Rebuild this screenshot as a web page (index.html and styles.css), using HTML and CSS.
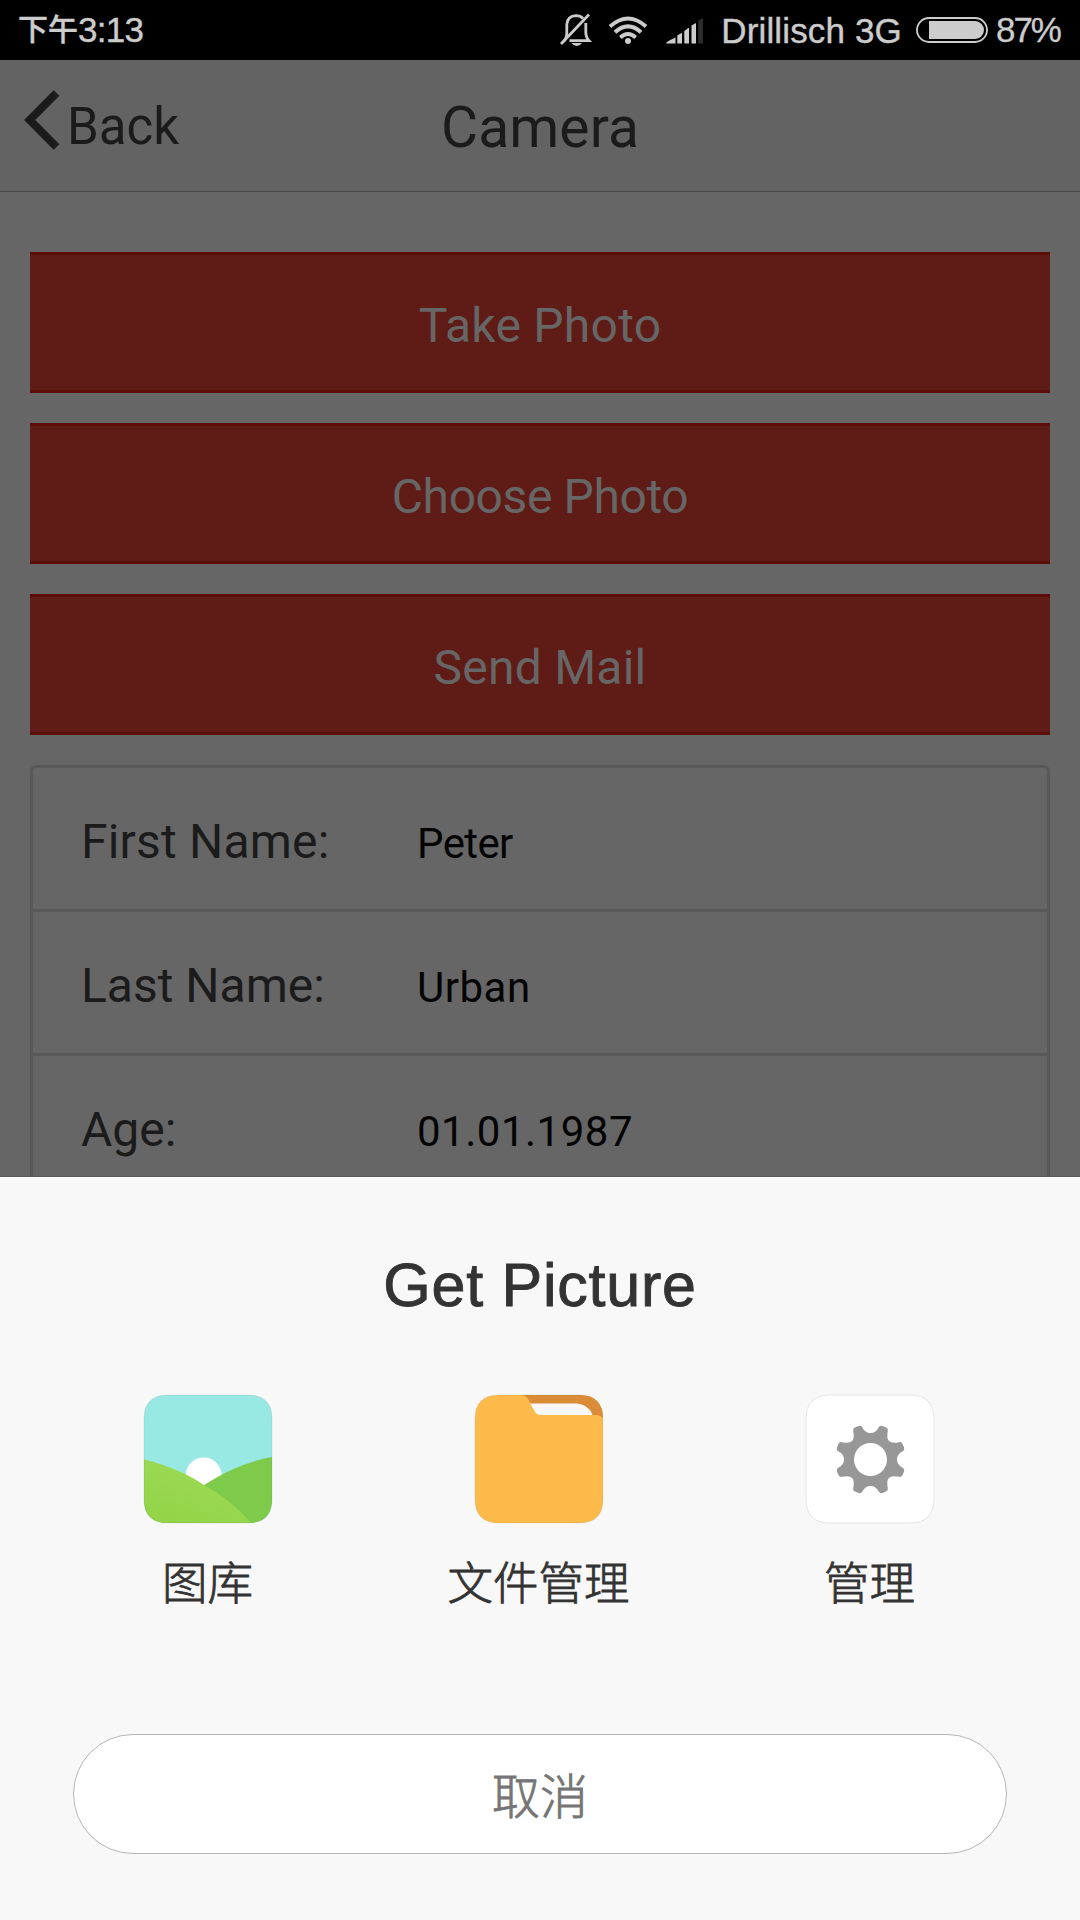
FILE: index.html
```html
<!DOCTYPE html>
<html lang="zh-CN">
<head>
<meta charset="utf-8">
<title>Camera</title>
<link rel="stylesheet" href="styles.css">
</head>
<body>
<div class="phone">
  <div class="status">
    <div class="clock"><span class="clock-cjk">下午</span>3:13</div>
    <div class="indicators">
      <svg class="ind-bell" viewBox="0 0 32 34" width="32" height="34">
        <g fill="none" stroke="#ccc" stroke-width="2.8">
          <path d="M3.500 28.300 Q6.800 25.500 6.800 20 V11.500 Q7.500 3 16 2.700 Q20.500 2.700 23 5.500"/>
          <path d="M9.500 27.700 H29 Q25.800 24.500 25.800 19 V10"/>
          <path d="M1 31 L29 1.500"/>
        </g>
        <path d="M11.500 30 H22 Q20 33 16.700 33 Q13.500 33 11.500 30Z" fill="#ccc"/>
      </svg>
      <svg class="ind-wifi" viewBox="0 0 40 28" width="40" height="28">
        <g fill="none" stroke="#ccc" stroke-width="4">
          <path d="M2 10.500 Q20 -5.500 38 10.500"/>
          <path d="M7 16.200 Q20 4.500 33 16.200"/>
          <path d="M12.300 21.500 Q20 14.500 27.700 21.500"/>
        </g>
        <circle cx="20" cy="25" r="3"/>
      </svg>
      <svg class="ind-signal" viewBox="0 0 38 26" width="38" height="26">
        <path fill="#ccc" d="M0 25.500 Q0 23.500 9.500 19.500 V25.500Z M11.300 25.500 V17.500 L16 14.700 V25.500Z M18.300 25.500 V13 L23 9.500 V25.500Z M25.500 25.500 V7.500 L30 5 V25.500Z"/>
        <path fill="#2c2c2c" d="M32.300 25.500 V2.500 L37 0 V25.500Z"/>
      </svg>
      <span class="carrier">Drillisch 3G</span>
      <svg class="ind-battery" viewBox="0 0 72 26" width="72" height="26">
        <rect x="1" y="1" width="70" height="24" rx="12" fill="none" stroke="#ccc" stroke-width="1.800"/>
        <path fill="#ccc" d="M13 4 H59 A9 9 0 0 1 59 22 H13Z"/>
      </svg>
      <span class="percent">87%</span>
    </div>
  </div>

  <div class="app">
    <div class="bar">
      <div class="back">
        <svg class="chevron" viewBox="0 0 36 60" width="36" height="60"><path d="M32.500 3 L5.700 30 L32.500 57" fill="none" stroke="#1b1b1b" stroke-width="8"/></svg>
        <span>Back</span>
      </div>
      <div class="title">Camera</div>
    </div>
    <div class="content">
      <div class="button">Take Photo</div>
      <div class="button button-tight">Choose Photo</div>
      <div class="button">Send Mail</div>
      <div class="card">
        <div class="row"><span class="label label-wide">First Name:</span><span class="value value-tight">Peter</span></div>
        <div class="row"><span class="label">Last Name:</span><span class="value">Urban</span></div>
        <div class="row"><span class="label">Age:</span><span class="value">01.01.1987</span></div>
      </div>
    </div>
  </div>

  <div class="sheet">
    <div class="sheet-title">Get Picture</div>
    <div class="choices">
      <div class="choice">
        <svg viewBox="0 0 130 130" width="130" height="130">
          <defs>
            <clipPath id="tile"><path id="tile-shape" d="M25 1 H105 Q129 1 129 25 V105 Q129 129 105 129 H25 Q1 129 1 105 V25 Q1 1 25 1Z"/></clipPath>
            <linearGradient id="hill" x1="0" y1="1" x2=".5" y2="0"><stop offset="0" stop-color="#92d346"/><stop offset="1" stop-color="#9cda55"/></linearGradient>
          </defs>
          <g clip-path="url(#tile)">
            <rect width="130" height="130" fill="#98e9e4"/>
            <circle cx="60.700" cy="81.500" r="18" fill="#fff"/>
            <path d="M129 63 Q95 69 61 91 V129 H129Z" fill="#7ecb4b"/>
            <path d="M0 65 Q38 75 61 91 Q90 107 109 130 H0Z" fill="url(#hill)"/>
          </g>
          <use href="#tile-shape" fill="none" stroke="#000" stroke-opacity=".08"/>
        </svg>
        <span>图库</span>
      </div>
      <div class="choice">
        <svg viewBox="0 0 130 130" width="130" height="130">
          <g clip-path="url(#tile)">
            <rect width="130" height="130" fill="#fcba4b"/>
            <path d="M47 0 H130 V28 Q129 21 122 21 H60 Z" fill="#da8c38"/>
            <path d="M54 9.500 H103 Q115 11 118.500 21 H62Z" fill="#f8f8f8"/>
            <path d="M40 1 H47 Q53 1 56 9 L61 18 Q63 21 67 21 V25 H40Z" fill="#fcba4b"/>
          </g>
          <use href="#tile-shape" fill="none" stroke="#000" stroke-opacity=".06"/>
        </svg>
        <span>文件管理</span>
      </div>
      <div class="choice">
        <svg viewBox="0 0 130 130" width="130" height="130">
          <use href="#tile-shape" fill="#fff" stroke="#e4e4e4"/>
          <path transform="translate(65.500 65.500)" fill="#979797" fill-rule="evenodd" d="M-8.300 -32.300 Q-5.500 -26.500 0 -26.500 Q5.500 -26.500 8.300 -32.300 Q9.500 -34.300 12 -33.600 L16 -31.800 Q17.800 -30.800 17.300 -28.500 Q15.800 -21 18.400 -18.400 Q21 -15.800 28.500 -17.300 Q30.800 -17.800 31.800 -16 L33.600 -12 Q34.300 -9.500 32.300 -8.300 Q26.500 -5.500 26.500 0 Q26.500 5.500 32.300 8.300 Q34.300 9.500 33.600 12 L31.800 16 Q30.800 17.800 28.500 17.300 Q21 15.800 18.400 18.400 Q15.800 21 17.300 28.500 Q17.800 30.800 16 31.800 L12 33.600 Q9.500 34.300 8.300 32.300 Q5.500 26.500 0 26.500 Q-5.500 26.500 -8.300 32.300 Q-9.500 34.300 -12 33.600 L-16 31.800 Q-17.800 30.800 -17.300 28.500 Q-15.800 21 -18.400 18.400 Q-21 15.800 -28.500 17.300 Q-30.800 17.800 -31.800 16 L-33.600 12 Q-34.300 9.500 -32.300 8.300 Q-26.500 5.500 -26.500 0 Q-26.500 -5.500 -32.300 -8.300 Q-34.300 -9.500 -33.600 -12 L-31.800 -16 Q-30.800 -17.800 -28.500 -17.300 Q-21 -15.800 -18.400 -18.400 Q-15.800 -21 -17.300 -28.500 Q-17.800 -30.800 -16 -31.800 L-12 -33.600 Q-9.500 -34.300 -8.300 -32.300Z M16.500 0 A16.500 16.500 0 1 0 -16.500 0 A16.500 16.500 0 1 0 16.500 0Z"/>
        </svg>
        <span>管理</span>
      </div>
    </div>
    <div class="cancel">取消</div>
  </div>
</div>
</body>
</html>
```
FILE: styles.css
```css
* { box-sizing: border-box; }

body {
  margin: 0;
  background: #666;
  font-family: Roboto, "Noto Sans CJK SC", sans-serif;
}

svg { display: block; flex: none; }

.phone {
  width: 1080px;
  height: 1920px;
  display: flex;
  flex-direction: column;
  overflow: hidden;
}

/* status bar */
.status {
  flex: none;
  height: 60px;
  padding: 0 20px 0 18px;
  display: flex;
  justify-content: space-between;
  background: #000;
  color: #ccc;
  font: 35px/60px "Liberation Sans", "Noto Sans CJK SC", sans-serif;
  white-space: nowrap;
}

.clock { display: flex; letter-spacing: -.7px; -webkit-text-stroke: .4px #ccc; }
.clock-cjk { font-size: 30px; font-weight: 500; letter-spacing: 0; line-height: 59px; }

.indicators { display: flex; align-items: flex-start; }
.ind-bell { margin: 13px 16px 0 0; }
.ind-wifi { margin: 16px 18px 0 0; fill: #ccc; }
.ind-signal { margin: 18px 17px 0 0; }
.carrier { letter-spacing: .15px; line-height: 62px; margin-right: 14px; -webkit-text-stroke: .4px #ccc; }
.ind-battery { margin: 17px 8px 0 0; }
.percent { letter-spacing: -2px; -webkit-text-stroke: .3px #ccc; }

/* dimmed app behind the sheet */
.app {
  flex: none;
  height: 1117px;
  overflow: hidden;
  background: #666;
  color: #1b1b1b;
  border-bottom: 1px solid #5a5a5a;
}

.bar {
  height: 132px;
  display: grid;
  grid-template-columns: 1fr auto 1fr;
  background: #636363;
  border-bottom: 1px solid #484848;
  white-space: nowrap;
}

.back {
  display: flex;
  padding-left: 24px;
  font-size: 51px;
  line-height: 134px;
}
.chevron { margin: 30px 7px 0 0; }

.title { font-size: 57px; line-height: 136px; letter-spacing: .1px; }

.content { padding: 60px 30px 0; }

.button {
  height: 141px;
  margin-bottom: 30px;
  border: solid #5b0d07;
  border-width: 3px 0;
  background: #5f1c17;
  color: #666;
  font-size: 48px;
  line-height: 141px;
  letter-spacing: .25px;
  text-align: center;
}
.button-tight { letter-spacing: -.4px; }

.card {
  border: 3px solid #585858;
  border-radius: 6px;
}

.row {
  height: 144px;
  padding-left: 48px;
  display: flex;
  border-bottom: 3px solid #585858;
  line-height: 147px;
}
.label { width: 336px; font-size: 48px; }
.label-wide { letter-spacing: .2px; }
.value { font-size: 42px; line-height: 151px; letter-spacing: .5px; color: #040404; }
.value-tight { letter-spacing: -.6px; }

/* bottom sheet */
.sheet {
  flex: 1;
  display: flex;
  flex-direction: column;
  align-items: center;
  padding-top: 59px;
  background: #f8f8f8;
  border-top: 1px solid #fff;
  color: #333;
}

.sheet-title {
  font: 61px/96px "Liberation Sans", sans-serif;
  letter-spacing: .75px;
  -webkit-text-stroke: .9px #333;
}

.choices {
  width: 993px;
  margin: 61px 3px 0 0;
  display: grid;
  grid-template-columns: repeat(3, 1fr);
}

.choice {
  display: flex;
  flex-direction: column;
  align-items: center;
  gap: 23px;
  font: 300 45.5px/66px "Noto Sans CJK SC", sans-serif;
  -webkit-text-stroke: .8px #333;
}

.cancel {
  width: 934px;
  height: 120px;
  margin-top: 121px;
  border: 1px solid #b5b5b5;
  border-radius: 60px;
  background: #fff;
  color: #757575;
  font: 300 48px/117px "Noto Sans CJK SC", sans-serif;
  -webkit-text-stroke: .8px #757575;
  text-align: center;
}
```
